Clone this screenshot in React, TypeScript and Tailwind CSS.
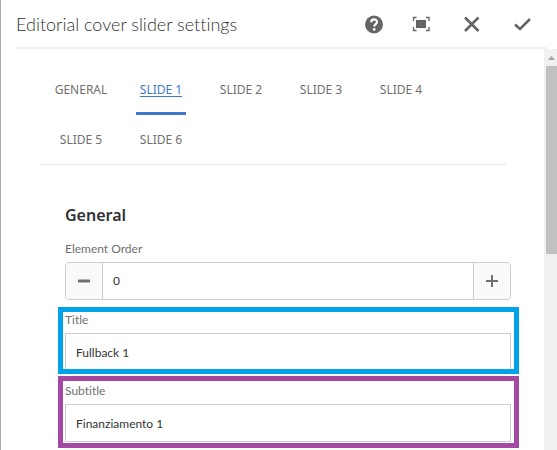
import React, { useState } from "react";

const TABS = ["GENERAL", "SLIDE 1", "SLIDE 2", "SLIDE 3", "SLIDE 4", "SLIDE 5", "SLIDE 6"];

function HeaderButton({ label, children }: { label: string; children: React.ReactNode }) {
  return (
    <button type="button" aria-label={label} className="flex h-12 w-[50px] items-center justify-center text-[#656565]">
      <svg width="24" height="24" viewBox="0 0 24 24" fill="none" stroke="currentColor" aria-hidden="true">
        {children}
      </svg>
    </button>
  );
}

function Header() {
  return (
    <header className="mr-[10px] ml-[15px] flex h-[49px] items-center border-b-2 border-[#f1f1f1]">
      <h1 className="flex-1 text-[18px] leading-6 font-light whitespace-nowrap text-[#323232]">
        Editorial cover slider settings
      </h1>
      <div className="flex">
        <HeaderButton label="Help">
          <circle cx="14" cy="12.5" r="9" fill="currentColor" stroke="none" />
          <path d="M11.2 10.2C11.2 6.4 17 6.4 17 10C17 12.1 14.2 12 14.2 14.6" stroke="#fff" strokeWidth="2.2" />
          <circle cx="14.2" cy="17.4" r="1.4" fill="#fff" stroke="none" />
        </HeaderButton>
        <HeaderButton label="Toggle fullscreen">
          <rect x="6" y="8" width="10" height="8" fill="currentColor" stroke="none" />
          <path d="M3.5 9V5.5H6.5M16 5.5H19V9M19 15V18.5H16M6.5 18.5H3.5V15" strokeWidth="1.3" />
        </HeaderButton>
        <HeaderButton label="Cancel">
          <path d="M5 5.5L18.5 19M18.5 5.5L5 19" strokeWidth="2.6" />
        </HeaderButton>
        <HeaderButton label="Done">
          <path d="M5 12.5L10 17L20 7" strokeWidth="2.6" />
        </HeaderButton>
      </div>
    </header>
  );
}

function Tabs({ active, onSelect }: { active: string; onSelect: (tab: string) => void }) {
  return (
    <div
      role="tablist"
      className="mr-[38px] ml-[39px] flex flex-wrap pl-px font-['Noto_Sans',sans-serif] shadow-[inset_0_-1px_0_#e6e6e6]"
    >
      {TABS.map((tab) => (
        <button
          key={tab}
          type="button"
          role="tab"
          aria-selected={tab === active}
          onClick={() => onSelect(tab)}
          className="flex h-[50px] w-20 justify-center text-[12px] leading-[50px] whitespace-nowrap text-[#707070]"
        >
          <span
            className={
              tab === active
                ? "h-full w-[50px] border-b-[3px] border-[#4178cd] text-[#4178cd] underline underline-offset-2"
                : "h-full"
            }
          >
            {tab}
          </span>
        </button>
      ))}
    </div>
  );
}

function OrderField() {
  const [value, setValue] = useState(0);
  const step = "flex w-9 shrink-0 items-center justify-center bg-[#fafafa] text-[#707070]";
  return (
    <div className="pr-2 pl-[7px]">
      <label htmlFor="order" className="block text-[12px] leading-5 text-[#707070]">
        Element Order
      </label>
      <div className="mt-[3px] flex h-[38px] overflow-hidden rounded border border-[#cdcdcd]">
        <button type="button" aria-label="Decrement" onClick={() => setValue(value - 1)} className={step}>
          <svg width="12" height="12" viewBox="0 0 12 12" aria-hidden="true">
            <path d="M1 6H11" stroke="currentColor" strokeWidth="3" strokeLinecap="round" />
          </svg>
        </button>
        <input
          id="order"
          value={value}
          onChange={(event) => setValue(Number(event.target.value) || 0)}
          className="min-w-0 flex-1 border-x border-[#cdcdcd] bg-white px-[10px] text-[12px] text-[#323232] outline-none"
        />
        <button type="button" aria-label="Increment" onClick={() => setValue(value + 1)} className={step}>
          <svg width="12" height="12" viewBox="0 0 12 12" aria-hidden="true">
            <path d="M0 6H12M6 0V12" stroke="currentColor" strokeWidth="2" />
          </svg>
        </button>
      </div>
    </div>
  );
}

function TextField({ id, label, text, frame }: { id: string; label: string; text: string; frame: string }) {
  return (
    <div className={"overflow-hidden border-[5px] pr-[3px] pl-[2px] " + frame}>
      <label htmlFor={id} className="block text-[12px] leading-4 text-[#707070]">
        {label}
      </label>
      <input
        id={id}
        defaultValue={text}
        className="mt-[5px] block h-[38px] w-full border border-[#cdcdcd] bg-white px-[10px] text-[12px] text-[#323232] outline-none"
      />
    </div>
  );
}

function Scrollbar() {
  return (
    <div aria-hidden="true" className="w-[13px] shrink-0 bg-[#f1f1f1] pl-[2px]">
      <div className="flex h-[17px] items-center justify-center">
        <svg width="7" height="4" viewBox="0 0 7 4">
          <path d="M3.5 0L7 4H0Z" fill="#a3a3a3" />
        </svg>
      </div>
      <div className="h-[188px] bg-[#c1c1c1]" />
    </div>
  );
}

export default function App() {
  const [active, setActive] = useState("SLIDE 1");
  return (
    <main className="flex h-screen flex-col overflow-hidden border-l border-[#aaa] bg-white font-[Lato,'Noto_Sans',sans-serif] [font-variant-ligatures:none]">
      <Header />
      <div className="flex min-h-0 flex-1">
        <div className="min-w-0 flex-1 pt-4">
          <Tabs active={active} onSelect={setActive} />
          <section className="mr-[25px] ml-[57px] pt-[38px]">
            <h2 className="pl-[7px] font-['Noto_Sans',sans-serif] text-[16px] leading-6 font-semibold text-[#323232]">
              General
            </h2>
            <div className="mt-3">
              <OrderField />
            </div>
            <div className="mt-[7px] flex flex-col gap-[2px]">
              <TextField id="title" label="Title" text="Fullback 1" frame="h-[67px] border-[#00a2e8]" />
              <TextField id="subtitle" label="Subtitle" text="Finanziamento 1" frame="h-[72px] pt-[2px] border-[#a349a4]" />
            </div>
          </section>
        </div>
        <Scrollbar />
      </div>
    </main>
  );
}
